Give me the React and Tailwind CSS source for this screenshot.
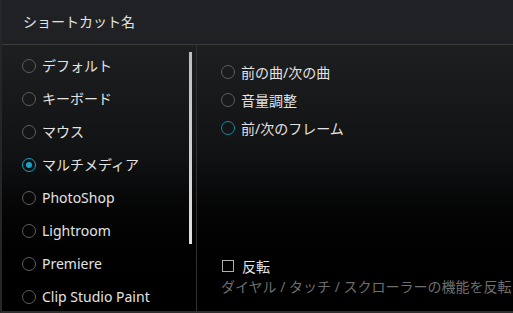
import React from 'react';

const presets = ['デフォルト', 'キーボード', 'マウス', 'マルチメディア', 'PhotoShop', 'Lightroom', 'Premiere', 'Clip Studio Paint'];
const actions = ['前の曲/次の曲', '音量調整', '前/次のフレーム'];

const Radio = ({ state }) => {
  if (state === 'checked') {
    return (
      <span className="w-[14px] h-[14px] rounded-full border-[1.5px] border-[#1ba3c4] flex items-center justify-center shrink-0">
        <span className="w-[6px] h-[6px] rounded-full bg-[#1ba3c4]" />
      </span>
    );
  }
  return (
    <span
      className={`w-[14px] h-[14px] rounded-full border-[1.5px] shrink-0 ${
        state === 'hover' ? 'border-[#15899c]' : 'border-[#5e5e5e]'
      }`}
    />
  );
};

const App = () => {
  return (
    <div
      className="w-[513px] h-[313px] overflow-hidden flex flex-col border-l-2 border-l-[#262626] border-b-2 border-b-[#2e2e2e] bg-gradient-to-b from-[#232427] via-[#111213] to-black text-[14px] text-[#e3e3e3]"
      style={{ fontFamily: '"Noto Sans", "Noto Sans CJK JP", sans-serif' }}
    >
      {/* Header */}
      <div className="h-[45px] shrink-0 flex items-center pl-[21px] pb-[1px] border-b border-[#3a3a3a] bg-[#202124]">
        ショートカット名
      </div>

      <div className="flex-1 flex min-h-0">
        {/* Preset list */}
        <div className="w-[195px] shrink-0 relative border-r border-[#303030] pt-[4px]">
          {presets.map((p, i) => (
            <div key={p} className="h-[33px] flex items-center gap-[6px] pl-[20px] whitespace-nowrap">
              <Radio state={i === 3 ? 'checked' : 'off'} />
              <span>{p}</span>
            </div>
          ))}
          <div className="absolute right-[4px] top-[7px] w-[3px] h-[192px] bg-gradient-to-b from-[#bdbdbd] to-[#e0e0e0]" />
        </div>

        {/* Actions */}
        <div className="flex-1 flex flex-col pl-[24px] pt-[13px] pb-[15px] min-w-0">
          {actions.map((a, i) => (
            <div key={a} className="h-[28px] flex items-center gap-[6px] whitespace-nowrap">
              <Radio state={i === 2 ? 'hover' : 'off'} />
              <span>{a}</span>
            </div>
          ))}
          <div className="mt-auto">
            <div className="h-[20px] flex items-center gap-[8px] pl-[1px]">
              <span className="w-[12px] h-[12px] border border-[#b0b0b0] shrink-0" />
              <span>反転</span>
            </div>
            <div className="h-[20px] flex items-center whitespace-nowrap text-[#6e6e6e]">
              ダイヤル / タッチ / スクローラーの機能を反転
            </div>
          </div>
        </div>
      </div>
    </div>
  );
};

export default App;
